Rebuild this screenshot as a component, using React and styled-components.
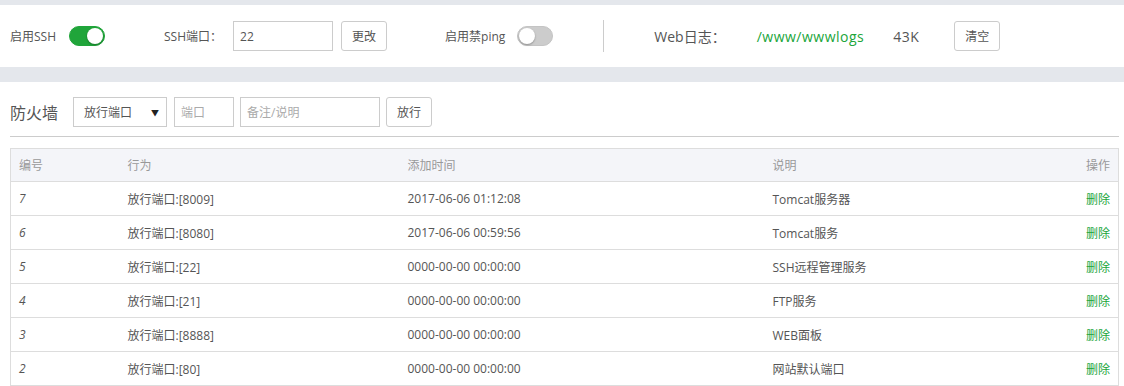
import React from 'react';
import styled, { createGlobalStyle } from 'styled-components';

const GlobalStyle = createGlobalStyle`
  body {
    margin: 0;
    background: #e4e7ec;
    font-family: "Open Sans", "Noto Sans CJK SC", sans-serif;
    color: #555;
  }
`;

const green = '#20a53a';

const rules = [
  { id: 7, port: 8009, time: '2017-06-06 01:12:08', note: 'Tomcat服务器' },
  { id: 6, port: 8080, time: '2017-06-06 00:59:56', note: 'Tomcat服务' },
  { id: 5, port: 22, time: '0000-00-00 00:00:00', note: 'SSH远程管理服务' },
  { id: 4, port: 21, time: '0000-00-00 00:00:00', note: 'FTP服务' },
  { id: 3, port: 8888, time: '0000-00-00 00:00:00', note: 'WEB面板' },
  { id: 2, port: 80, time: '0000-00-00 00:00:00', note: '网站默认端口' }
];

export default function App() {
  return (
    <Page>
      <GlobalStyle />
      <SettingsBar>
        <Label>启用SSH</Label>
        <Switch $on $gap={13} />
        <Label $gap={59}>SSH端口：</Label>
        <TextInput $gap={11} $width={100} defaultValue="22" />
        <Button $gap={8}>更改</Button>
        <Label $gap={58}>启用禁ping</Label>
        <Switch $gap={12} />
        <Divider />
        <BigLabel>Web日志：</BigLabel>
        <LogPath>/www/wwwlogs</LogPath>
        <LogSize>43K</LogSize>
        <Button $gap={35}>清空</Button>
      </SettingsBar>
      <Content>
        <FormRow>
          <Title>防火墙</Title>
          <Select>
            <span>放行端口</span>
            <Arrow>▼</Arrow>
          </Select>
          <TextInput $gap={7} $width={60} placeholder="端口" />
          <TextInput $gap={6} $width={140} placeholder="备注/说明" />
          <Button $gap={6}>放行</Button>
        </FormRow>
        <Rule />
        <Table>
          <colgroup>
            <col style={{ width: 109 }} />
            <col style={{ width: 280 }} />
            <col style={{ width: 365 }} />
            <col />
            <col style={{ width: 120 }} />
          </colgroup>
          <thead>
            <tr>
              <Th>编号</Th>
              <Th>行为</Th>
              <Th>添加时间</Th>
              <Th>说明</Th>
              <Th $right>操作</Th>
            </tr>
          </thead>
          <tbody>
            {rules.map((r) => (
              <tr key={r.id}>
                <Td $italic>{r.id}</Td>
                <Td>放行端口:[{r.port}]</Td>
                <Td>{r.time}</Td>
                <Td>{r.note}</Td>
                <Td $right>
                  <Link>删除</Link>
                </Td>
              </tr>
            ))}
          </tbody>
        </Table>
      </Content>
    </Page>
  );
}

const Page = styled.div`
  padding-top: 5px;
  min-height: 386px;
`;

const SettingsBar = styled.div`
  display: flex;
  align-items: center;
  height: 62px;
  padding-left: 10px;
  background: #fff;
  margin-bottom: 15px;
`;

const Label = styled.span`
  font-size: 12px;
  color: #555;
  margin-left: ${(p) => p.$gap || 0}px;
  white-space: nowrap;
`;

const BigLabel = styled.span`
  font-size: 14px;
  color: #555;
  margin-left: 50px;
`;

const LogPath = styled.span`
  font-size: 14px;
  color: ${green};
  margin-left: 31px;
  letter-spacing: 0.5px;
`;

const LogSize = styled.span`
  font-size: 14px;
  color: #555;
  margin-left: 29px;
  letter-spacing: 0.5px;
`;

const Switch = styled.span`
  position: relative;
  display: inline-block;
  box-sizing: border-box;
  width: 36px;
  height: 20px;
  border-radius: 10px;
  margin-left: ${(p) => p.$gap || 0}px;
  background: ${(p) => (p.$on ? green : '#ccc')};
  border: 1px solid ${(p) => (p.$on ? green : '#c4c4c4')};

  &::after {
    content: '';
    position: absolute;
    top: 1px;
    left: ${(p) => (p.$on ? '17px' : '1px')};
    width: 16px;
    height: 16px;
    border-radius: 50%;
    background: #fff;
    box-shadow: 0 1px 2px rgba(0, 0, 0, 0.3);
  }
`;

const Divider = styled.span`
  width: 1px;
  height: 32px;
  background: #ccc;
  margin-left: 50px;
`;

const TextInput = styled.input`
  box-sizing: border-box;
  width: ${(p) => p.$width}px;
  height: 30px;
  margin: 0 0 0 ${(p) => p.$gap || 0}px;
  padding: 0 6px;
  border: 1px solid #ccc;
  border-radius: 0;
  font: inherit;
  font-size: 12px;
  color: #555;
  outline: none;

  &::placeholder {
    color: #aaa;
  }
`;

const Button = styled.button`
  box-sizing: border-box;
  height: 30px;
  padding: 0 10px;
  margin-left: ${(p) => p.$gap || 0}px;
  background: #fff;
  border: 1px solid #ccc;
  border-radius: 3px;
  font: inherit;
  font-size: 12px;
  color: #555;
`;

const Content = styled.div`
  background: #fff;
  padding: 15px 5px 0 10px;
`;

const FormRow = styled.div`
  display: flex;
  align-items: center;
  height: 30px;
`;

const Title = styled.span`
  font-size: 16px;
  color: #555;
  width: 63px;
`;

const Select = styled.div`
  box-sizing: border-box;
  display: flex;
  align-items: center;
  justify-content: space-between;
  width: 94px;
  height: 30px;
  padding: 0 7px 0 10px;
  border: 1px solid #ccc;
  font-size: 12px;
  color: #555;
`;

const Arrow = styled.span`
  font-size: 8px;
  color: #222;
`;

const Rule = styled.div`
  height: 1px;
  background: #ccc;
  margin: 9px 0 11px;
`;

const Table = styled.table`
  width: 100%;
  table-layout: fixed;
  border-collapse: collapse;
  border: 1px solid #ddd;
  font-size: 12px;
`;

const Th = styled.th`
  height: 32px;
  padding: 0 8px;
  background: #f4f5f9;
  border-bottom: 1px solid #ddd;
  color: #999;
  font-weight: normal;
  text-align: ${(p) => (p.$right ? 'right' : 'left')};
`;

const Td = styled.td`
  height: 33px;
  padding: 0 8px;
  border-bottom: 1px solid #ddd;
  color: #555;
  font-style: ${(p) => (p.$italic ? 'italic' : 'normal')};
  text-align: ${(p) => (p.$right ? 'right' : 'left')};
  white-space: nowrap;
`;

const Link = styled.a`
  color: ${green};
  cursor: pointer;
`;
